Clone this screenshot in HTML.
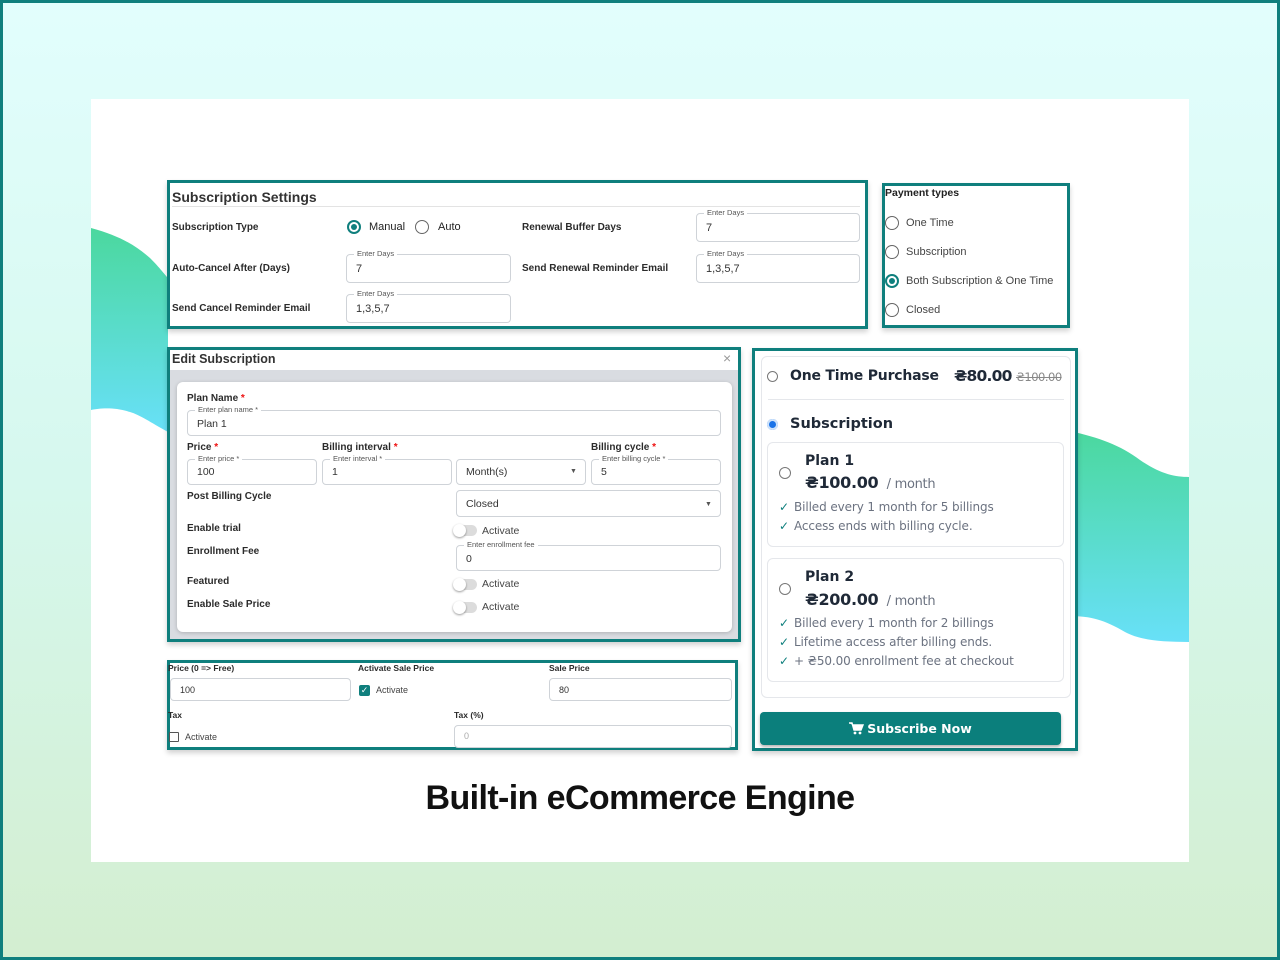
<!DOCTYPE html>
<html><head><meta charset="utf-8"><style>
*{box-sizing:border-box;margin:0;padding:0}
body{width:1280px;height:960px;position:relative;overflow:hidden;font-family:"Liberation Sans",sans-serif;color:#222;background:linear-gradient(#e2fefd,#d6f8ee 50%,#d3eed0);}
.frame{position:absolute;left:0;top:0;width:1280px;height:960px;border:3px solid #0f7f7d;}
.a{position:absolute;white-space:nowrap}
.box{position:absolute;border:3px solid #0f7f7d;background:#fff;box-shadow:0 3px 5px rgba(0,0,0,.18)}
.lb{position:absolute;font-size:10px;font-weight:bold;color:#2b2b2b;white-space:nowrap}
.f{position:absolute;border:1px solid #cfd3d8;border-radius:4px;background:#fff;font-size:11px;color:#333;padding-left:9px}
.f .l{position:absolute;top:-6px;left:7px;background:#fff;padding:0 3px;font-size:7.5px;color:#555;line-height:10px}
.rd{position:absolute;width:14px;height:14px;border:1.5px solid #666;border-radius:50%;background:#fff}
.rd.on{border:2px solid #0f7f7d}
.rd.on::after{content:"";position:absolute;left:2px;top:2px;width:6px;height:6px;border-radius:50%;background:#0f7f7d}
.tg{position:absolute;width:23px;height:11px;border-radius:6px;background:#dcdcdc}
.tg::after{content:"";position:absolute;left:-1px;top:-1px;width:13px;height:13px;border-radius:50%;background:#fff;box-shadow:0 1px 2px rgba(0,0,0,.4)}
.p{font-family:"DejaVu Sans","Liberation Sans",sans-serif}
.sr{position:absolute;width:11px;height:11px;border:1px solid #777;border-radius:50%;background:#fff}
.ck{position:absolute;font-size:12px;color:#6b7280;letter-spacing:-.1px}
.ck b{color:#0f7f7d;font-weight:bold;margin-right:5px}
</style></head><body>
<div class="frame"></div>
<div class="a" style="left:91px;top:99px;width:1098px;height:763px;background:#fff"></div>
<svg class="a" style="left:0;top:0" width="1280" height="960">
<defs><linearGradient id="g" x1="0" y1="0" x2="0" y2="1"><stop offset="0" stop-color="#4bd89e"/><stop offset="1" stop-color="#68e0f8"/></linearGradient></defs>
<path d="M91 228 C120 236 135 245 150 258 C160 268 165 275 168 278 L168 432 C150 422 140 415 130 412 C115 407 100 408 91 410 Z" fill="url(#g)"/>
<path d="M1070 431 C1100 438 1120 445 1140 460 C1160 474 1175 477 1189 477 L1189 642 C1160 642 1140 640 1125 632 C1105 620 1090 616 1070 616 Z" fill="url(#g)"/>
</svg>

<div class="box" style="left:167px;top:180px;width:701px;height:149px"></div>
<div class="a" style="left:172px;top:189px;font-size:14px;font-weight:bold;color:#333">Subscription Settings</div>
<div class="a" style="left:172px;top:206px;width:688px;height:1px;background:#e3e3e3"></div>
<div class="lb" style="left:172px;top:222px">Subscription Type</div>
<div class="lb" style="left:172px;top:263px">Auto-Cancel After (Days)</div>
<div class="lb" style="left:172px;top:303px">Send Cancel Reminder Email</div>
<div class="rd on" style="left:347px;top:220px"></div><div class="a" style="left:369px;top:221px;font-size:11px">Manual</div>
<div class="rd" style="left:415px;top:220px"></div><div class="a" style="left:438px;top:221px;font-size:11px">Auto</div>
<div class="f" style="left:346px;top:254px;width:165px;height:29px;padding-top:8px"><span class="l">Enter Days</span>7</div>
<div class="f" style="left:346px;top:294px;width:165px;height:29px;padding-top:8px"><span class="l">Enter Days</span>1,3,5,7</div>
<div class="lb" style="left:522px;top:222px">Renewal Buffer Days</div>
<div class="lb" style="left:522px;top:263px">Send Renewal Reminder Email</div>
<div class="f" style="left:696px;top:213px;width:164px;height:29px;padding-top:8px"><span class="l">Enter Days</span>7</div>
<div class="f" style="left:696px;top:254px;width:164px;height:29px;padding-top:8px"><span class="l">Enter Days</span>1,3,5,7</div>

<div class="box" style="left:882px;top:183px;width:188px;height:145px"></div>
<div class="a" style="left:885px;top:187px;font-size:10.5px;font-weight:bold">Payment types</div>
<div class="rd" style="left:885px;top:216px"></div><div class="a" style="left:906px;top:217px;font-size:11px;color:#444">One Time</div>
<div class="rd" style="left:885px;top:245px"></div><div class="a" style="left:906px;top:246px;font-size:11px;color:#444">Subscription</div>
<div class="rd on" style="left:885px;top:274px"></div><div class="a" style="left:906px;top:275px;font-size:11px;color:#444">Both Subscription &amp; One Time</div>
<div class="rd" style="left:885px;top:303px"></div><div class="a" style="left:906px;top:304px;font-size:11px;color:#444">Closed</div>

<div class="box" style="left:167px;top:347px;width:574px;height:295px"></div>
<div class="a" style="left:170px;top:370px;width:568px;height:269px;background:#d9dce1"></div>
<div class="a" style="left:172px;top:352px;font-size:12.5px;font-weight:bold;color:#333">Edit Subscription</div>
<div class="a" style="left:723px;top:350px;font-size:14px;color:#999">×</div>
<div class="a" style="left:177px;top:382px;width:555px;height:250px;background:#fff;border-radius:6px;box-shadow:0 1px 4px rgba(0,0,0,.2)"></div>
<div class="lb" style="left:187px;top:393px">Plan Name <span style="color:#e11">*</span></div>
<div class="f" style="left:187px;top:410px;width:534px;height:26px;padding-top:7px;font-size:10.5px"><span class="l">Enter plan name *</span>Plan 1</div>
<div class="lb" style="left:187px;top:442px">Price <span style="color:#e11">*</span></div>
<div class="lb" style="left:322px;top:442px">Billing interval <span style="color:#e11">*</span></div>
<div class="lb" style="left:591px;top:442px">Billing cycle <span style="color:#e11">*</span></div>
<div class="f" style="left:187px;top:459px;width:130px;height:26px;padding-top:6px;font-size:10.5px"><span class="l">Enter price *</span>100</div>
<div class="f" style="left:322px;top:459px;width:130px;height:26px;padding-top:6px;font-size:10.5px"><span class="l">Enter interval *</span>1</div>
<div class="f" style="left:456px;top:459px;width:130px;height:26px;padding-top:6px;font-size:10.5px">Month(s)<span class="a" style="left:113px;top:8px;font-size:7px;color:#555">▼</span></div>
<div class="f" style="left:591px;top:459px;width:130px;height:26px;padding-top:6px;font-size:10.5px"><span class="l">Enter billing cycle *</span>5</div>
<div class="lb" style="left:187px;top:491px">Post Billing Cycle</div>
<div class="f" style="left:456px;top:490px;width:265px;height:27px;padding-top:7px;font-size:10.5px">Closed<span class="a" style="left:248px;top:10px;font-size:7px;color:#555">▼</span></div>
<div class="lb" style="left:187px;top:523px">Enable trial</div>
<div class="tg" style="left:454px;top:525px"></div><div class="a" style="left:482px;top:525px;font-size:10.5px;color:#444">Activate</div>
<div class="lb" style="left:187px;top:546px">Enrollment Fee</div>
<div class="f" style="left:456px;top:545px;width:265px;height:26px;padding-top:7px;font-size:10.5px"><span class="l">Enter enrollment fee</span>0</div>
<div class="lb" style="left:187px;top:576px">Featured</div>
<div class="tg" style="left:454px;top:579px"></div><div class="a" style="left:482px;top:578px;font-size:10.5px;color:#444">Activate</div>
<div class="lb" style="left:187px;top:599px">Enable Sale Price</div>
<div class="tg" style="left:454px;top:602px"></div><div class="a" style="left:482px;top:601px;font-size:10.5px;color:#444">Activate</div>

<div class="box" style="left:167px;top:660px;width:571px;height:90px"></div>
<div class="lb" style="left:168px;top:663px;font-size:8.5px">Price (0 =&gt; Free)</div>
<div class="lb" style="left:358px;top:663px;font-size:8.5px">Activate Sale Price</div>
<div class="lb" style="left:549px;top:663px;font-size:8.5px">Sale Price</div>
<div class="f" style="left:170px;top:678px;width:181px;height:23px;padding-top:6px;font-size:9px">100</div>
<div class="a" style="left:359px;top:685px;width:11px;height:11px;background:#0f7f7d;border-radius:2px;color:#fff;font-size:9px;line-height:11px;text-align:center">✓</div>
<div class="a" style="left:376px;top:685px;font-size:9px;color:#444">Activate</div>
<div class="f" style="left:549px;top:678px;width:183px;height:23px;padding-top:6px;font-size:9px">80</div>
<div class="lb" style="left:168px;top:710px;font-size:8.5px">Tax</div>
<div class="lb" style="left:454px;top:710px;font-size:8.5px">Tax (%)</div>
<div class="a" style="left:169px;top:732px;width:10px;height:10px;border:1px solid #555;border-radius:1px"></div>
<div class="a" style="left:185px;top:732px;font-size:9px;color:#444">Activate</div>
<div class="f" style="left:454px;top:725px;width:278px;height:23px;padding-top:5px;font-size:9px;color:#aaa">0</div>

<div class="box" style="left:752px;top:348px;width:326px;height:403px"></div>
<div class="a" style="left:761px;top:356px;width:310px;height:342px;border:1px solid #e5e7eb;border-radius:6px"></div>
<div class="sr" style="left:767px;top:371px"></div>
<div class="a p" style="left:790px;top:368px;font-size:14px;font-weight:bold;color:#1f2937;letter-spacing:-.2px">One Time Purchase</div>
<div class="a p" style="left:954px;top:367px;font-size:15.5px;font-weight:bold;color:#1f2937;letter-spacing:-.8px">₴80.00</div>
<div class="a p" style="left:1016px;top:370px;font-size:11.5px;color:#888;text-decoration:line-through;letter-spacing:-.5px">₴100.00</div>
<div class="a" style="left:768px;top:399px;width:296px;height:1px;background:#e5e7eb"></div>
<div class="a" style="left:767px;top:419px;width:11px;height:11px;border-radius:50%;background:#1a73e8;box-shadow:inset 0 0 0 2px #cfe3fb"></div>
<div class="a p" style="left:790px;top:416px;font-size:14.5px;font-weight:bold;color:#1f2937">Subscription</div>

<div class="a" style="left:767px;top:442px;width:297px;height:105px;border:1px solid #e5e7eb;border-radius:6px"></div>
<div class="sr" style="left:779px;top:467px;width:12px;height:12px"></div>
<div class="a p" style="left:805px;top:453px;font-size:14px;font-weight:bold;color:#1f2937">Plan 1</div>
<div class="a p" style="left:805px;top:473px;font-size:16px;font-weight:bold;color:#1f2937;letter-spacing:-.3px">₴100.00 <span style="font-weight:normal;font-size:13px;color:#6b7280;margin-left:3px">/ month</span></div>
<div class="ck p" style="left:779px;top:500px"><b>✓</b>Billed every 1 month for 5 billings</div>
<div class="ck p" style="left:779px;top:519px"><b>✓</b>Access ends with billing cycle.</div>

<div class="a" style="left:767px;top:558px;width:297px;height:124px;border:1px solid #e5e7eb;border-radius:6px"></div>
<div class="sr" style="left:779px;top:583px;width:12px;height:12px"></div>
<div class="a p" style="left:805px;top:569px;font-size:14px;font-weight:bold;color:#1f2937">Plan 2</div>
<div class="a p" style="left:805px;top:590px;font-size:16px;font-weight:bold;color:#1f2937;letter-spacing:-.3px">₴200.00 <span style="font-weight:normal;font-size:13px;color:#6b7280;margin-left:3px">/ month</span></div>
<div class="ck p" style="left:779px;top:616px"><b>✓</b>Billed every 1 month for 2 billings</div>
<div class="ck p" style="left:779px;top:635px"><b>✓</b>Lifetime access after billing ends.</div>
<div class="ck p" style="left:779px;top:654px"><b>✓</b>+ ₴50.00 enrollment fee at checkout</div>

<div class="a" style="left:760px;top:712px;width:301px;height:33px;background:#0b7f7c;border-radius:4px;box-shadow:0 2px 3px rgba(0,0,0,.3);color:#fff;font-size:12.5px;font-weight:bold;text-align:center;line-height:33px"><svg width="15" height="13" viewBox="0 0 15 13" style="vertical-align:-2px;margin-right:3px"><path d="M0 1h3l2 7h7l2-5H4" fill="#fff" stroke="#fff" stroke-width="1.4"/><circle cx="6" cy="11" r="1.4" fill="#fff"/><circle cx="11" cy="11" r="1.4" fill="#fff"/></svg><span class="p">Subscribe Now</span></div>

<div class="a" style="left:0;width:1280px;top:779px;text-align:center;font-size:34px;font-weight:bold;color:#111;letter-spacing:-.6px">Built-in eCommerce Engine</div>
</body></html>
